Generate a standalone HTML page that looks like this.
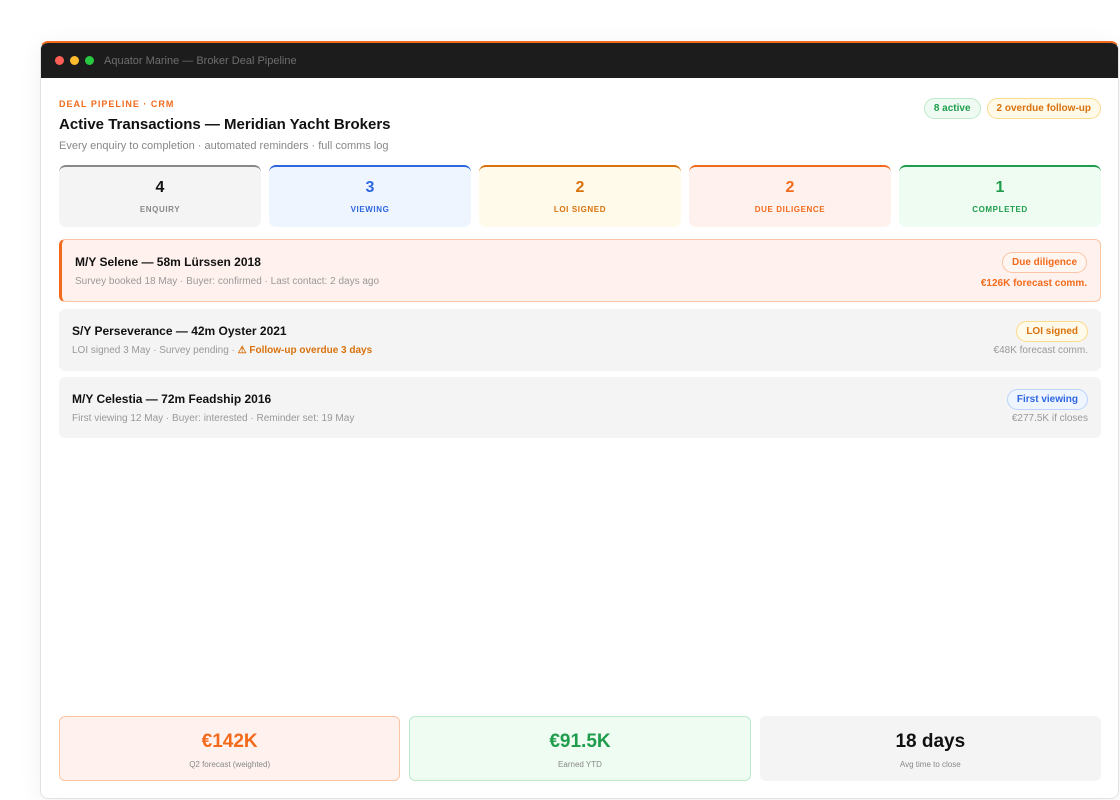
<!DOCTYPE html>
<html><head><meta charset="utf-8"><style>
*{box-sizing:border-box;margin:0;padding:0}
body{width:1120px;height:800px;background:#fff;font-family:"Liberation Sans",sans-serif;position:relative;overflow:hidden}
.win{position:absolute;left:40px;top:41px;width:1079px;height:758px;border-radius:8px;background:#fff;border:1px solid #e2e2e2;border-top:2px solid #f26a1b;overflow:hidden;box-shadow:0 4px 24px rgba(0,0,0,.06)}
.bar{height:35px;background:#1c1c1c;display:flex;align-items:center;padding-left:14px}
.dot{width:9px;height:9px;border-radius:50%;margin-right:6px}
.bar span{color:#6e6e6e;font-size:11px;margin-left:4px}
.c{position:absolute;left:18px;right:17px}
.eye{top:56px;font-size:9px;font-weight:bold;letter-spacing:1px;color:#f26a1b}
.h1{top:73px;font-size:15px;font-weight:bold;color:#111}
.sub{top:97px;font-size:11px;color:#888}
.pills{position:absolute;right:17px;top:55px;display:flex;gap:6px}
.pill{font-size:10px;font-weight:bold;padding:4px 9px;border-radius:11px;border:1px solid}
.stats{top:122px;display:flex;gap:8px}
.st{flex:1;height:62px;border-radius:7px;border-top:2px solid;text-align:center}
.st b{display:block;font-size:16px;margin-top:12px}
.st i{display:block;font-style:normal;font-size:8px;font-weight:bold;letter-spacing:.6px;margin-top:8px}
.row{position:absolute;left:18px;right:17px;border-radius:6px;background:#f4f4f4;padding:0 13px}
.row .t{position:absolute;top:15px;font-size:12px;font-weight:bold;color:#111}
.row .d{position:absolute;top:36px;font-size:10px;color:#999}
.row .b{position:absolute;right:13px;top:12px;font-size:10px;font-weight:bold;padding:4px 9px;border-radius:11px;border:1px solid}
.row .m{position:absolute;right:13px;top:36px;font-size:10px;color:#999}
.bot{top:673px;display:flex;gap:9px}
.bc{flex:1;height:65px;border-radius:6px;border:1px solid;text-align:center}
.bc b{display:block;font-size:19px;margin-top:14px}
.bc i{display:block;font-style:normal;font-size:8px;color:#888;margin-top:7px}
</style></head><body>
<div class="win">
<div class="bar"><div class="dot" style="background:#ff5f57"></div><div class="dot" style="background:#febc2e"></div><div class="dot" style="background:#28c840"></div><span>Aquator Marine — Broker Deal Pipeline</span></div>
<div class="c eye">DEAL PIPELINE · CRM</div>
<div class="c h1">Active Transactions — Meridian Yacht Brokers</div>
<div class="c sub">Every enquiry to completion · automated reminders · full comms log</div>
<div class="pills"><div class="pill" style="color:#1f9d4d;background:#effbf2;border-color:#bde9cb">8 active</div><div class="pill" style="color:#d9720c;background:#fff9e8;border-color:#fbdc8c">2 overdue follow-up</div></div>
<div class="c stats">
<div class="st" style="background:#f4f4f4;border-color:#888"><b style="color:#111">4</b><i style="color:#888">ENQUIRY</i></div>
<div class="st" style="background:#eef5ff;border-color:#2f67e0"><b style="color:#2f67e0">3</b><i style="color:#2f67e0">VIEWING</i></div>
<div class="st" style="background:#fffae9;border-color:#d9720c"><b style="color:#d9720c">2</b><i style="color:#d9720c">LOI SIGNED</i></div>
<div class="st" style="background:#fff2ee;border-color:#f26a1b"><b style="color:#f26a1b">2</b><i style="color:#f26a1b">DUE DILIGENCE</i></div>
<div class="st" style="background:#effcf2;border-color:#1f9d4d"><b style="color:#1f9d4d">1</b><i style="color:#1f9d4d">COMPLETED</i></div>
</div>
<div class="row" style="top:196px;height:63px;background:#fff2ee;border:1px solid #fbc4a4;border-left:3px solid #f26a1b">
<div class="t">M/Y Selene — 58m Lürssen 2018</div>
<div class="d">Survey booked 18 May · Buyer: confirmed · Last contact: 2 days ago</div>
<div class="b" style="color:#f26a1b;background:#fff6f2;border-color:#fbc4a4">Due diligence</div>
<div class="m" style="color:#f26a1b;font-weight:bold;top:38px">€126K forecast comm.</div>
</div>
<div class="row" style="top:266px;height:62px">
<div class="t">S/Y Perseverance — 42m Oyster 2021</div>
<div class="d">LOI signed 3 May · Survey pending · <span style="color:#d9720c;font-weight:bold">⚠ Follow-up overdue 3 days</span></div>
<div class="b" style="color:#d9720c;background:#fffae9;border-color:#fbdc8c">LOI signed</div>
<div class="m">€48K forecast comm.</div>
</div>
<div class="row" style="top:334px;height:61px">
<div class="t">M/Y Celestia — 72m Feadship 2016</div>
<div class="d">First viewing 12 May · Buyer: interested · Reminder set: 19 May</div>
<div class="b" style="color:#2f67e0;background:#eef5ff;border-color:#bcd3fb">First viewing</div>
<div class="m">€277.5K if closes</div>
</div>
<div class="c bot">
<div class="bc" style="background:#fff2ee;border-color:#fbc4a4"><b style="color:#f26a1b">€142K</b><i>Q2 forecast (weighted)</i></div>
<div class="bc" style="background:#effcf2;border-color:#bde9cb"><b style="color:#1f9d4d">€91.5K</b><i>Earned YTD</i></div>
<div class="bc" style="background:#f4f4f4;border-color:#f4f4f4"><b style="color:#111">18 days</b><i>Avg time to close</i></div>
</div>
</div>
</body></html>
